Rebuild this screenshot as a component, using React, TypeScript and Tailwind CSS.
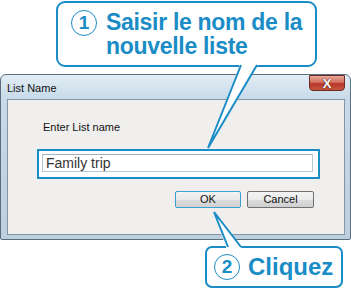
import React from "react";

const BLUE = "#1a8cc6";

function Circled({ n }: { n: string }) {
  return (
    <div className="w-[26px] h-[26px] rounded-full border-[1.5px] border-[#1a8cc6] flex items-center justify-center shrink-0">
      <span className="text-[19px] leading-none font-bold text-[#1a8cc6] -mt-[1px]">{n}</span>
    </div>
  );
}

function Tails() {
  return (
    <svg className="absolute inset-0 pointer-events-none" width="351" height="290" viewBox="0 0 351 290">
      {/* top callout tail */}
      <polygon points="240,64 208,149 258,64" fill="#ffffff" />
      <polyline points="241,65 208,148 257,65" fill="none" stroke={BLUE} strokeWidth="2" strokeLinejoin="miter" />
      {/* bottom callout tail */}
      <polygon points="227,250 214,212 243,250" fill="#ffffff" />
      <polyline points="228,247 214,212 241,247" fill="none" stroke={BLUE} strokeWidth="2" strokeLinejoin="miter" />
    </svg>
  );
}

export default function App() {
  return (
    <div
      className="relative w-[351px] h-[290px] bg-white overflow-hidden flex flex-col"
      style={{ fontFamily: '"Liberation Sans", Arial, sans-serif' }}
    >
      {/* top callout */}
      <div className="mt-[1px] ml-[56px] w-[261px] h-[66px] shrink-0 border-2 border-[#1a8cc6] rounded-[9px] bg-white flex items-start pl-[13px] pt-[6px]">
        <div className="mt-[1px]">
          <Circled n="1" />
        </div>
        <div className="ml-[9px] pt-[2px] text-[23px] leading-[23.5px] font-bold tracking-[-0.3px] text-[#1a8cc6]">
          <div>Saisir le nom de la</div>
          <div>nouvelle liste</div>
        </div>
      </div>

      {/* dialog window */}
      <div className="mt-[7px] w-[351px] h-[166px] shrink-0 border border-[#5b6e7e] rounded-t-[6px] rounded-b-[2px] bg-[linear-gradient(180deg,#e2edf5_0%,#c8dbe9_14%,#c0d4e2_60%,#bcd0de_100%)] flex flex-col pl-[6px] pr-[5px] pb-[4px]">
        <div className="h-[24px] flex items-start justify-between">
          <span className="text-[11px] leading-[13px] text-[#111] mt-[7px]">List Name</span>
          <div className="w-[36px] h-[16px] rounded-b-[4px] border border-[#6b2a22] bg-[linear-gradient(180deg,#e8a89c_0%,#d3705f_45%,#b8362a_55%,#c8543f_100%)] flex items-center justify-center">
            <span
              className="text-[13px] leading-none font-bold text-white"
              style={{ textShadow: "0 0 1px #3a1a16, 0 0 1px #3a1a16" }}
            >
              X
            </span>
          </div>
        </div>

        <div className="flex-1 border border-[#8496a6] bg-[#f0efed] flex flex-col">
          <span className="mt-[21px] ml-[35px] text-[11px] leading-[13px] text-[#111]">Enter List name</span>

          <div className="mt-[15px] ml-[29px] w-[283px] h-[30px] border-2 border-[#1a8cc6] bg-white pl-[3px] pt-[3px]">
            <div className="w-[271px] h-[18px] border border-[#b3c7d5] border-t-[#9fb4c4] bg-white flex items-center pl-[3px]">
              <span className="text-[14px] leading-none text-[#333]">Family trip</span>
            </div>
          </div>

          <div className="mt-[12px] ml-[167px] flex gap-[6px]">
            <div className="w-[66px] h-[17px] rounded-[2px] border border-[#3aa0d2] bg-[linear-gradient(180deg,#f3f3f3_0%,#e9e9e9_50%,#dcdcdc_52%,#d2d2d2_100%)] flex items-center justify-center">
              <span className="text-[11px] leading-none text-[#111]">OK</span>
            </div>
            <div className="w-[67px] h-[17px] rounded-[2px] border border-[#707070] bg-[linear-gradient(180deg,#f3f3f3_0%,#ebebeb_50%,#dddddd_52%,#d0d0d0_100%)] flex items-center justify-center">
              <span className="text-[11px] leading-none text-[#111]">Cancel</span>
            </div>
          </div>
        </div>
      </div>

      {/* bottom callout */}
      <div className="mt-[6px] ml-[205px] w-[138px] h-[42px] shrink-0 border-2 border-[#1a8cc6] rounded-[7px] bg-white flex items-center pl-[7px]">
        <Circled n="2" />
        <span className="ml-[8px] text-[24px] leading-none font-bold text-[#1a8cc6]">Cliquez</span>
      </div>

      <Tails />
    </div>
  );
}
